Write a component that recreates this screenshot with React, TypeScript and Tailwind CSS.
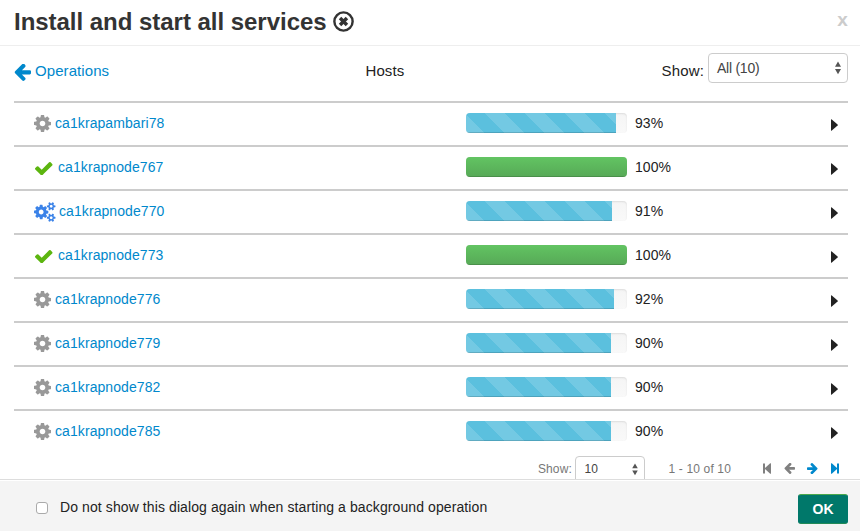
import type { ReactNode } from "react";

type Status = "pending" | "done" | "running";

const hosts: { name: string; percent: number; fill: number; status: Status }[] = [
  { name: "ca1krapambari78", percent: 93, fill: 150, status: "pending" },
  { name: "ca1krapnode767", percent: 100, fill: 161, status: "done" },
  { name: "ca1krapnode770", percent: 91, fill: 146, status: "running" },
  { name: "ca1krapnode773", percent: 100, fill: 161, status: "done" },
  { name: "ca1krapnode776", percent: 92, fill: 148, status: "pending" },
  { name: "ca1krapnode779", percent: 90, fill: 145, status: "pending" },
  { name: "ca1krapnode782", percent: 90, fill: 145, status: "pending" },
  { name: "ca1krapnode785", percent: 90, fill: 145, status: "pending" },
];

const cogPath =
  "M1024 896q0-106-75-181t-181-75-181 75-75 181 75 181 181 75 181-75 75-181zm512-109v222q0 12-8 23t-20 13l-185 28q-19 54-39 91 35 50 107 138 10 12 10 25t-9 23q-27 37-99 108t-94 71q-12 0-26-9l-138-108q-44 23-91 38-16 136-29 186-7 28-36 28h-222q-14 0-24.5-8.5t-11.5-21.5l-28-184q-49-16-90-37l-141 107q-10 9-25 9-14 0-25-11-126-114-165-168-7-10-7-23 0-12 8-23 15-21 51-66.5t54-70.5q-27-50-41-99l-183-27q-13-2-21-12.5t-8-23.5v-222q0-12 8-23t19-13l186-28q14-46 39-92-40-57-107-138-10-12-10-24 0-10 9-23 26-36 98.5-107.5t94.5-71.5q13 0 26 10l138 107q44-23 91-38 16-136 29-186 7-28 36-28h222q14 0 24.5 8.5t11.5 21.5l28 184q49 16 90 37l142-107q9-9 24-9 13 0 25 10 129 119 165 170 7 8 7 22 0 12-8 23-15 21-51 66.5t-54 70.5q26 50 41 98l183 28q13 2 21 12.5t8 23.5z";
const checkPath =
  "M1671 566q0 40-28 68l-724 724-136 136q-28 28-68 28t-68-28l-136-136-362-362q-28-28-28-68t28-68l136-136q28-28 68-28t68 28l294 295 656-657q28-28 68-28t68 28l136 136q28 28 28 68z";
const arrowPath =
  "M1664 896v128q0 53-32.5 90.5t-84.5 37.5h-704l293 294q38 36 38 90t-38 90l-75 76q-37 37-90 37-52 0-91-37l-651-652q-37-37-37-90 0-52 37-91l651-650q38-38 91-38 52 0 90 38l75 74q38 38 38 91t-38 91l-293 293h704q52 0 84.5 37.5t32.5 90.5z";
const smallCogPath =
  "M128 0q0-52-38-90t-90-38-90 38-38 90q0 53 37.5 90.5t90.5 37.5 90.5-37.5 37.5-90.5zm256-70v140q0 16-149 31-12 27-30 52 51 113 51 138 0 4-4 7-122 71-124 71-8 0-46-47t-52-68q-20 2-30 2t-30-2q-14 21-52 68t-46 47q-2 0-124-71-4-3-4-7 0-25 51-138-18-25-30-52-149-15-149-31v-140q0-16 149-31 13-29 30-52-51-113-51-138 0-4 4-7 4-2 35-20t59-34 30-16q8 0 46 46.5t52 67.5q20-2 30-2t30 2q51-71 92-112l6-2q4 0 124 70 4 3 4 7 0 25-51 138 17 23 30 52 149 15 149 31z";

function Cog() {
  return (
    <svg viewBox="0 128 1536 1536" className="h-[17px] w-[17px] fill-[#999]">
      <path fillRule="evenodd" d={cogPath} />
    </svg>
  );
}

function Cogs() {
  return (
    <svg viewBox="0 0 1920 1792" className="h-[20px] w-[21.5px] fill-[#3a82e8]">
      <path fillRule="evenodd" transform="translate(0 149.3) scale(.8333)" d={cogPath} />
      <path fillRule="evenodd" transform="translate(1536 384)" d={smallCogPath} />
      <path fillRule="evenodd" transform="translate(1536 1408)" d={smallCogPath} />
    </svg>
  );
}

function Check() {
  return (
    <svg viewBox="121 334 1550 1188" className="mt-[2px] ml-[1px] h-[13.5px] w-[17.5px] fill-[#5cb50f]">
      <path d={checkPath} />
    </svg>
  );
}

function StatusIcon({ status }: { status: Status }) {
  if (status === "done") return <span className="flex w-6 items-center"><Check /></span>;
  if (status === "running") return <span className="flex w-[25px] items-center"><Cogs /></span>;
  return <span className="flex w-[21px] items-center"><Cog /></span>;
}

function UpDown({ className }: { className: string }) {
  return (
    <svg viewBox="0 0 8 14" className={className}>
      <path d="M4 .5L7 5.7H1zM4 13.2L1 8h6z" />
    </svg>
  );
}

function Arrow({ className }: { className: string }) {
  return (
    <svg viewBox="128 212 1536 1536" className={className}>
      <path d={arrowPath} />
    </svg>
  );
}

function EdgeArrow({ className }: { className: string }) {
  return (
    <svg viewBox="0 0 8 11" className={className}>
      <path d="M0 .5h2v4.4L7.2 .3q.8-.4.8.4v9.6q0 .8-.8.4L2 6.1v4.4H0z" />
    </svg>
  );
}

function Progress({ fill, done }: { fill: number; done: boolean }) {
  return (
    <div className="h-5 w-[161px] overflow-hidden rounded-[4px] bg-gradient-to-b from-[#f5f5f5] to-[#f9f9f9] shadow-[inset_0_1px_2px_rgba(0,0,0,0.1)]">
      <div
        className={
          done
            ? "h-full bg-gradient-to-b from-[#62c462] to-[#57a957] shadow-[inset_0_-1px_0_rgba(0,0,0,0.15)]"
            : "h-full bg-[#5bc0de] bg-[linear-gradient(45deg,rgba(255,255,255,0.15)_25%,transparent_25%,transparent_50%,rgba(255,255,255,0.15)_50%,rgba(255,255,255,0.15)_75%,transparent_75%,transparent)] bg-[length:40px_40px] bg-[position:19px_0] shadow-[inset_0_-1px_0_rgba(0,0,0,0.15)]"
        }
        style={{ width: fill }}
      />
    </div>
  );
}

function SmallText({ children, className }: { children: ReactNode; className: string }) {
  return <span className={`text-[12px] leading-5 whitespace-nowrap text-[#777] ${className}`}>{children}</span>;
}

export default function App() {
  return (
    <div className="flex h-[531px] w-[860px] flex-col overflow-hidden bg-white font-['Liberation_Sans',Arial,sans-serif] text-[14px] leading-5 tracking-[0.08px] text-[#222]">
      <header className="flex h-[46px] shrink-0 items-start border-b border-[#eee] pl-[14px] pr-3">
        <h3 className="mt-[7px] text-[24px] leading-[30px] font-bold tracking-[-0.03px] whitespace-nowrap text-[#333]">
          Install and start all services
        </h3>
        <svg viewBox="0 0 20 20" className="mt-[11px] ml-[6px] h-[21px] w-[21px] shrink-0">
          <circle cx="10" cy="10" r="8.7" fill="none" stroke="#333" strokeWidth="2.3" />
          <path d="M6.7 6.7l6.6 6.6M13.3 6.7l-6.6 6.6" stroke="#333" strokeWidth="3.3" />
        </svg>
        <button className="mt-[10px] ml-auto text-[19px] leading-5 font-bold text-[#ccc]">x</button>
      </header>

      <main className="h-[433px] shrink-0 overflow-hidden pr-3 pl-[14px]">
        <div className="flex h-[55px] items-start text-[15px] tracking-[0.08px]">
          <a className="flex w-[351.5px] pt-[15px] text-[#0088cc]">
            <Arrow className="mt-[3px] mr-[4px] h-[17px] w-[17px] fill-[#0088cc]" />
            <span>Operations</span>
          </a>
          <span className="pt-[15px]">Hosts</span>
          <span className="mr-[4px] ml-auto pt-[15px] tracking-[0.15px]">Show:</span>
          <div className="mt-[7px] flex h-[30px] w-[140px] items-center rounded-[4px] border border-[#ccc] pr-[5px] pl-2 text-[14px] tracking-[-0.25px] text-[#444]">
            <span>All (10)</span>
            <UpDown className="ml-auto h-[14px] w-[8px] fill-[#555]" />
          </div>
        </div>

        {hosts.map((host) => (
          <div key={host.name} className="flex h-11 items-start border-t-2 border-[#ccc] pt-[10px] pl-5">
            <div className="flex h-5 w-[432px] items-center">
              <span className="mt-[1px] flex"><StatusIcon status={host.status} /></span>
              <a className="text-[#0088cc]">{host.name}</a>
            </div>
            <Progress fill={host.fill} done={host.status === "done"} />
            <span className="ml-2">{host.percent}%</span>
            <svg viewBox="0 0 7 12" className="mt-[6px] mr-[10.5px] ml-auto h-[12px] w-[7px] fill-[#222]">
              <path d="M0 .5Q0 0 .5 .3L6.6 5.5Q7 6 6.6 6.5L.5 11.7Q0 12 0 11.5z" />
            </svg>
          </div>
        ))}

        <div className="flex h-[30px] items-start justify-end pt-[3px]">
          <SmallText className="mt-[3px] mr-[3.5px] tracking-[0.15px]">Show:</SmallText>
          <div className="flex h-[30px] w-[70px] shrink-0 items-start rounded-[4px] border border-[#ccc] pr-[5px] pl-2 text-[12px] text-[#444]">
            <span className="mt-[2px]">10</span>
            <UpDown className="mt-[6px] ml-auto h-[13px] w-[8px] fill-[#555]" />
          </div>
          <SmallText className="mt-[3px] ml-[23px] tracking-[0.15px]">1 - 10 of 10</SmallText>
          <div className="mt-[7px] mr-[9px] ml-[32px] flex shrink-0 items-center">
            <EdgeArrow className="h-[11px] w-[8px] fill-[#808080]" />
            <Arrow className="ml-[13px] h-[11px] w-[11px] fill-[#808080]" />
            <Arrow className="ml-[12px] h-[11px] w-[11px] rotate-180 fill-[#0088cc]" />
            <EdgeArrow className="ml-[13px] h-[11px] w-[8px] rotate-180 fill-[#0088cc]" />
          </div>
        </div>
      </main>

      <footer className="flex h-[52px] shrink-0 items-start border-t border-[#ddd] bg-[#f4f4f4] pr-3 pl-9 shadow-[inset_0_1px_0_#fff]">
        <span className="mt-[22px] h-3 w-3 rounded-[3px] border border-[#aaa] bg-white" />
        <label className="mt-[17px] ml-3 tracking-[0.095px] whitespace-nowrap">
          Do not show this dialog again when starting a background operation
        </label>
        <button className="mt-[14px] ml-auto h-[30px] w-[50px] rounded-[3px] border border-t-[#4aa84c] border-r-[#00786a] border-b-[#228a57] border-l-[#00786a] bg-[#00786a] text-[14px] leading-[28px] font-bold tracking-[-0.1px] text-white">
          OK
        </button>
      </footer>
    </div>
  );
}
